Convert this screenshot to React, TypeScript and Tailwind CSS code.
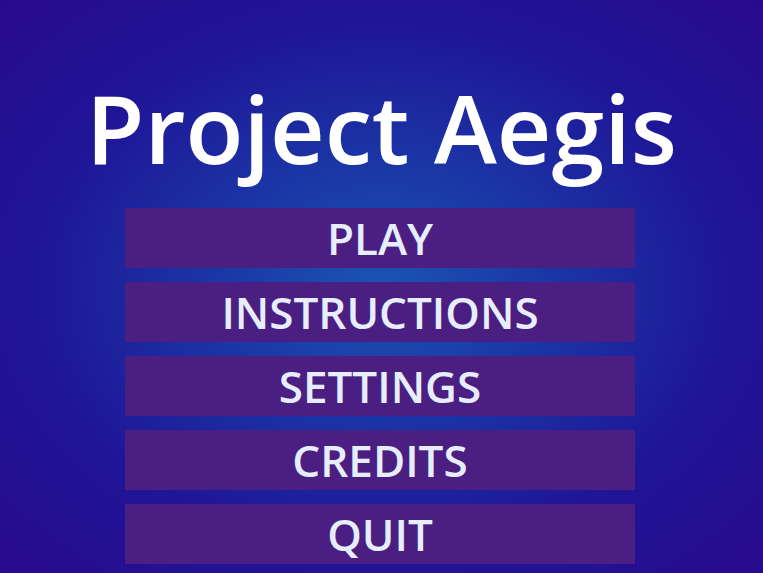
const items = ['PLAY', 'INSTRUCTIONS', 'SETTINGS', 'CREDITS', 'QUIT']

export default function App() {
  return (
    <div
      className="h-[573px] w-[763px] overflow-hidden bg-[radial-gradient(ellipse_at_50%_50%,#1a55b2_0%,#1b32a4_35%,#1f1597_65%,#290a8e_100%)] font-['Open_Sans',sans-serif]"
    >
      <div className="flex flex-col items-center pt-[80px]">
        {/* Title */}
        <h1 className="text-[95px] font-semibold leading-[95px] text-white">Project Aegis</h1>

        {/* Menu */}
        <div className="mr-[3px] mt-[33px] flex w-[510px] flex-col gap-[14px]">
          {items.map((label) => (
            <button
              key={label}
              className="h-[60px] w-full bg-[#4b1e82] text-[44px] font-semibold leading-[60px] text-[#e6eefc]"
            >
              {label}
            </button>
          ))}
        </div>
      </div>
    </div>
  )
}
